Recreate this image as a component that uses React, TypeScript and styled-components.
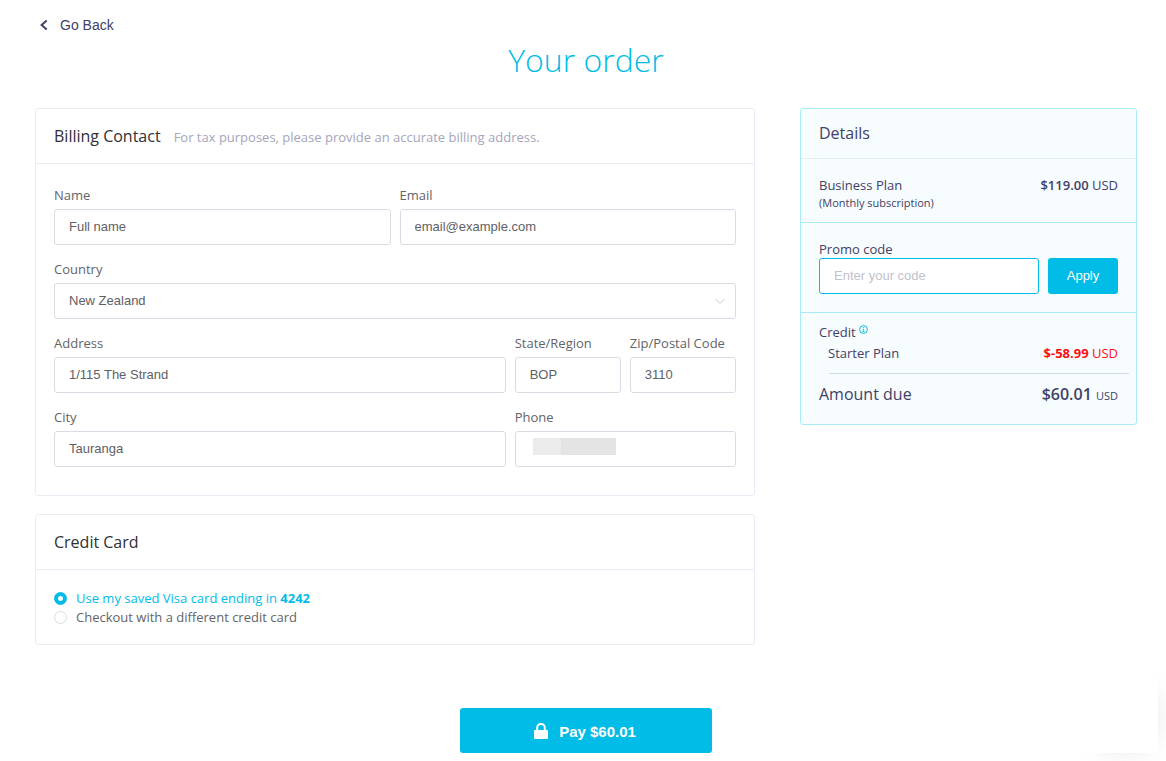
import React, { useId } from 'react';
import styled, { createGlobalStyle } from 'styled-components';

const cyan = '#00bce7';
const navy = '#3f4166';
const heading = '"Open Sans", "Noto Sans", sans-serif';
const control = '"Liberation Sans", Arial, sans-serif';

const GlobalStyle = createGlobalStyle`
  *, *::before, *::after { box-sizing: border-box; }
  body {
    margin: 0;
    background: #fff;
    color: #636468;
    font-family: ${heading};
    font-size: 13px;
    line-height: 18px;
  }
`;

const Page = styled.main`
  padding: 16px 29px 8px 35px;
`;

const BackLink = styled.a`
  display: inline-flex;
  align-items: center;
  gap: 11px;
  padding-left: 4px;
  color: ${navy};
  font-family: ${control};
  font-size: 14px;
  line-height: 18px;
  text-decoration: none;
`;

const Title = styled.h1`
  margin: 3px 0 26px;
  color: ${cyan};
  font-size: 32px;
  font-weight: 300;
  line-height: 44px;
  text-align: center;
`;

const Columns = styled.div`
  display: grid;
  grid-template-columns: minmax(0, 720fr) minmax(0, 337fr);
  gap: 45px;
  align-items: start;
`;

const Stack = styled.div`
  display: grid;
  gap: 18px;
`;

const Card = styled.section`
  border: 1px solid #ebebf5;
  border-radius: 3px;
`;

const CardHeader = styled.header`
  display: flex;
  align-items: baseline;
  gap: 13px;
  padding: 15px 18px;
  border-bottom: 1px solid #ebebf5;
`;

const CardTitle = styled.h2`
  margin: 0;
  color: #303034;
  font-size: 16px;
  font-weight: 400;
  line-height: 24px;
`;

const CardNote = styled.p`
  margin: 0;
  color: #a5a5bb;
`;

const Fields = styled.div`
  display: grid;
  grid-template-columns: repeat(6, minmax(0, 1fr));
  gap: 15px 9px;
  padding: 22px 18px 28px;
`;

const FieldBox = styled.div<{ $span: number }>`
  grid-column: span ${(p) => p.$span};
  display: flex;
  flex-direction: column;
  gap: 5px;
  white-space: nowrap;
`;

const TextInput = styled.input<{ $redacted?: boolean }>`
  width: 100%;
  height: 36px;
  padding: 0 14px 2px;
  border: 1px solid #dbdbe6;
  border-radius: 3px;
  outline: 0;
  background: ${(p) =>
    p.$redacted
      ? 'linear-gradient(90deg, #ebebeb 28px, #e4e4e4 28px) 17px 6px / 83px 17px no-repeat #fff'
      : '#fff'};
  color: #5f6064;
  font-family: ${control};
  font-size: 13px;
  line-height: 18px;
`;

const SelectWrap = styled.div`
  position: relative;

  svg {
    position: absolute;
    top: 15px;
    right: 10px;
    pointer-events: none;
  }
`;

const Select = styled.select`
  display: block;
  width: 100%;
  height: 36px;
  padding: 0 14px 2px;
  border: 1px solid #dbdbe6;
  border-radius: 3px;
  appearance: none;
  background: #fff;
  color: #5f6064;
  font-family: ${control};
  font-size: 13px;
`;

const Options = styled.div`
  display: grid;
  gap: 1px;
  padding: 19px 18px 18px;
`;

const Option = styled.label<{ $active?: boolean }>`
  display: flex;
  align-items: center;
  gap: 9px;
  color: ${(p) => (p.$active ? cyan : '#636468')};
`;

const Radio = styled.input`
  width: 13px;
  height: 13px;
  margin: 0;
  border: 1px solid #dbdbe6;
  border-radius: 50%;
  appearance: none;
  background: #fff;

  &:checked {
    border-color: ${cyan};
    background: radial-gradient(circle, #fff 2px, ${cyan} 3px);
  }
`;

const Details = styled.aside`
  border: 1px solid #a9ecf8;
  border-radius: 3px;
  background: #f7fcff;
  color: ${navy};
`;

const DetailsHeader = styled.header`
  padding: 12px 18px 13px;
  border-bottom: 1px solid #e3edf2;
`;

const DetailsTitle = styled(CardTitle)`
  color: ${navy};
`;

const PlanSection = styled.section`
  padding: 17px 18px 11px;
  border-bottom: 1px solid #a9ecf8;
`;

const Line = styled.div<{ $indent?: boolean }>`
  display: flex;
  align-items: baseline;
  justify-content: space-between;
  padding-left: ${(p) => (p.$indent ? 9 : 0)}px;
`;

const Price = styled.span<{ $negative?: boolean }>`
  color: ${(p) => (p.$negative ? '#ff0d12' : navy)};

  b {
    font-weight: ${(p) => (p.$negative ? 700 : 600)};
  }
`;

const Small = styled.small`
  display: block;
  font-size: 11px;
  line-height: 17px;
`;

const PromoSection = styled.form`
  padding: 18px;
  border-bottom: 1px solid #a9ecf8;
`;

const PromoLabel = styled.label`
  display: block;
  line-height: 17px;
`;

const PromoRow = styled.div`
  display: flex;
  gap: 9px;
`;

const PromoInput = styled(TextInput)`
  flex: 1;
  min-width: 0;
  border-color: ${cyan};

  &::placeholder {
    color: #bfc2cb;
    opacity: 1;
  }
`;

const ApplyButton = styled.button`
  width: 70px;
  height: 36px;
  padding: 0 0 2px;
  border: 0;
  border-radius: 3px;
  background: ${cyan};
  color: #fff;
  font-family: ${control};
  font-size: 13px;
`;

const CreditSection = styled.section`
  display: grid;
  grid-template-columns: minmax(0, 1fr);
  gap: 3px;
  padding: 10px 18px 16px;
`;

const CreditTitle = styled.div`
  display: flex;
  align-items: flex-start;
  gap: 3px;

  svg {
    margin-top: 2px;
  }
`;

const Rule = styled.hr`
  margin: 8px -11px 5px 10px;
  border: 0;
  border-top: 1px solid #d5dce2;
`;

const Total = styled(Line)`
  font-size: 16px;
  line-height: 24px;
`;

const TotalPrice = styled.span`
  b {
    font-weight: 600;
  }

  small {
    font-size: 11px;
  }
`;

const Actions = styled.div`
  display: flex;
  justify-content: center;
  margin-top: 63px;
`;

const PayButton = styled.button`
  display: inline-flex;
  align-items: center;
  justify-content: center;
  gap: 11px;
  width: 252px;
  height: 45px;
  padding: 2px 8px 0 6px;
  border: 0;
  border-radius: 3px;
  background: ${cyan};
  color: #fff;
  font-family: ${control};
  font-size: 15px;
  font-weight: 700;

  svg {
    margin-bottom: 2px;
  }
`;

const CornerShadow = styled.div`
  position: fixed;
  right: 0;
  bottom: 0;
  width: 106px;
  height: 101px;
  overflow: hidden;
  pointer-events: none;

  &::before {
    content: '';
    position: absolute;
    right: 12px;
    bottom: 14px;
    width: 60px;
    height: 60px;
    border-radius: 50%;
    box-shadow: 0 0 30px rgba(0, 0, 0, 0.15);
  }

  &::after {
    content: '';
    position: absolute;
    inset: 0 8px 8px 0;
    background: #fff;
  }
`;

type FieldProps = {
  label: string;
  span: number;
  value?: string;
  redacted?: boolean;
};

function Field({ label, span, value, redacted }: FieldProps) {
  const id = useId();
  return (
    <FieldBox $span={span}>
      <label htmlFor={id}>{label}</label>
      <TextInput id={id} type="text" defaultValue={value} $redacted={redacted} />
    </FieldBox>
  );
}

export default function App() {
  return (
    <>
      <GlobalStyle />
      <CornerShadow />
      <Page>
        <BackLink href="#back">
          <svg width="10" height="12" viewBox="0 0 10 12" fill="none" stroke={navy} strokeWidth="2">
            <path d="M7.7 1.5 2.6 6l5.1 4.5" />
          </svg>
          Go Back
        </BackLink>
        <Title>Your order</Title>
        <Columns>
          <Stack>
            <Card>
              <CardHeader>
                <CardTitle>Billing Contact</CardTitle>
                <CardNote>For tax purposes, please provide an accurate billing address.</CardNote>
              </CardHeader>
              <Fields>
                <Field label="Name" span={3} value="Full name" />
                <Field label="Email" span={3} value="email@example.com" />
                <FieldBox $span={6}>
                  <label htmlFor="country">Country</label>
                  <SelectWrap>
                    <Select id="country" defaultValue="NZ">
                      <option value="NZ">New Zealand</option>
                    </Select>
                    <svg width="12" height="7" viewBox="0 0 12 7" fill="none" stroke="#c6c7d2">
                      <path d="M1.5 1 6 5.5 10.5 1" />
                    </svg>
                  </SelectWrap>
                </FieldBox>
                <Field label="Address" span={4} value="1/115 The Strand" />
                <Field label="State/Region" span={1} value="BOP" />
                <Field label="Zip/Postal Code" span={1} value="3110" />
                <Field label="City" span={4} value="Tauranga" />
                <Field label="Phone" span={2} redacted />
              </Fields>
            </Card>
            <Card>
              <CardHeader>
                <CardTitle>Credit Card</CardTitle>
              </CardHeader>
              <Options>
                <Option $active>
                  <Radio type="radio" name="card" defaultChecked />
                  <span>
                    Use my saved Visa card ending in <b>4242</b>
                  </span>
                </Option>
                <Option>
                  <Radio type="radio" name="card" />
                  <span>Checkout with a different credit card</span>
                </Option>
              </Options>
            </Card>
          </Stack>
          <Details>
            <DetailsHeader>
              <DetailsTitle>Details</DetailsTitle>
            </DetailsHeader>
            <PlanSection>
              <Line>
                <span>Business Plan</span>
                <Price>
                  <b>$119.00</b> USD
                </Price>
              </Line>
              <Small>(Monthly subscription)</Small>
            </PlanSection>
            <PromoSection onSubmit={(e) => e.preventDefault()}>
              <PromoLabel htmlFor="promo">Promo code</PromoLabel>
              <PromoRow>
                <PromoInput id="promo" type="text" placeholder="Enter your code" />
                <ApplyButton type="submit">Apply</ApplyButton>
              </PromoRow>
            </PromoSection>
            <CreditSection>
              <CreditTitle>
                Credit
                <svg width="9" height="9" viewBox="0 0 9 9" fill="none" stroke={cyan}>
                  <circle cx="4.5" cy="4.5" r="3.9" />
                  <path d="M3.6 4h1v2.5M3.5 6.5h2M4.1 2.5h.9" strokeWidth=".8" />
                </svg>
              </CreditTitle>
              <Line $indent>
                <span>Starter Plan</span>
                <Price $negative>
                  <b>$-58.99</b> USD
                </Price>
              </Line>
              <Rule />
              <Total>
                <span>Amount due</span>
                <TotalPrice>
                  <b>$60.01</b> <small>USD</small>
                </TotalPrice>
              </Total>
            </CreditSection>
          </Details>
        </Columns>
        <Actions>
          <PayButton type="button">
            <svg width="14" height="16" viewBox="0 0 14 16">
              <path d="M3.2 7.5V4.7a3.8 3.8 0 0 1 7.6 0v2.8" fill="none" stroke="#fff" strokeWidth="2" />
              <rect y="7" width="14" height="9" rx="1" fill="#fff" />
            </svg>
            Pay $60.01
          </PayButton>
        </Actions>
      </Page>
    </>
  );
}
